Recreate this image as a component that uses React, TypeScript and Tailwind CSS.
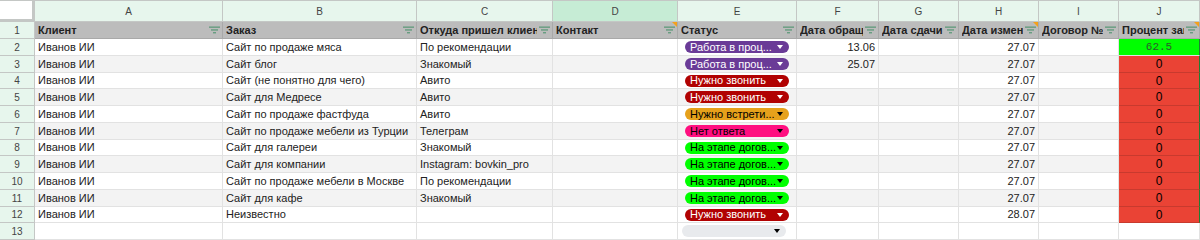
import React from 'react';

type Status = { label: string; bg: string; text: string; tri: string } | null;

const cols = [
  { key: 'A', w: 'w-[188px]' },
  { key: 'B', w: 'w-[194px]' },
  { key: 'C', w: 'w-[136px]' },
  { key: 'D', w: 'w-[125px]' },
  { key: 'E', w: 'w-[119px]' },
  { key: 'F', w: 'w-[82px]' },
  { key: 'G', w: 'w-[80px]' },
  { key: 'H', w: 'w-[80px]' },
  { key: 'I', w: 'w-[80px]' },
  { key: 'J', w: 'w-[81px]' },
];

const headers = [
  'Клиент',
  'Заказ',
  'Откуда пришел клиент',
  'Контакт',
  'Статус',
  'Дата обращения',
  'Дата сдачи',
  'Дата изменения',
  'Договор №',
  'Процент заполнения',
];

const work = { label: 'Работа в проц...', bg: 'bg-[#6a3b97]', text: 'text-white', tri: 'border-t-white' };
const call = { label: 'Нужно звонить', bg: 'bg-[#b10202]', text: 'text-white', tri: 'border-t-white' };
const meet = { label: 'Нужно встрети...', bg: 'bg-[#e6a11b]', text: 'text-black', tri: 'border-t-black' };
const noAnswer = { label: 'Нет ответа', bg: 'bg-[#ff0f80]', text: 'text-black', tri: 'border-t-black' };
const deal = { label: 'На этапе догов...', bg: 'bg-[#00ff00]', text: 'text-black', tri: 'border-t-black' };
const empty = { label: '', bg: 'bg-[#e8eaed]', text: 'text-black', tri: 'border-t-black' };

const rows: { a: string; b: string; c: string; s: Status; f: string; h: string; j: string }[] = [
  { a: 'Иванов ИИ', b: 'Сайт по продаже мяса', c: 'По рекомендации', s: work, f: '13.06', h: '27.07', j: '62.5' },
  { a: 'Иванов ИИ', b: 'Сайт блог', c: 'Знакомый', s: work, f: '25.07', h: '27.07', j: '0' },
  { a: 'Иванов ИИ', b: 'Сайт (не понятно для чего)', c: 'Авито', s: call, f: '', h: '27.07', j: '0' },
  { a: 'Иванов ИИ', b: 'Сайт для Медресе', c: 'Авито', s: call, f: '', h: '27.07', j: '0' },
  { a: 'Иванов ИИ', b: 'Сайт по продаже фастфуда', c: 'Авито', s: meet, f: '', h: '27.07', j: '0' },
  { a: 'Иванов ИИ', b: 'Сайт по продаже мебели из Турции', c: 'Телеграм', s: noAnswer, f: '', h: '27.07', j: '0' },
  { a: 'Иванов ИИ', b: 'Сайт для галереи', c: 'Знакомый', s: deal, f: '', h: '27.07', j: '0' },
  { a: 'Иванов ИИ', b: 'Сайт для компании', c: 'Instagram: bovkin_pro', s: deal, f: '', h: '27.07', j: '0' },
  { a: 'Иванов ИИ', b: 'Сайт по продаже мебели в Москве', c: 'По рекомендации', s: deal, f: '', h: '27.07', j: '0' },
  { a: 'Иванов ИИ', b: 'Сайт для кафе', c: 'Знакомый', s: deal, f: '', h: '27.07', j: '0' },
  { a: 'Иванов ИИ', b: 'Неизвестно', c: '', s: call, f: '', h: '28.07', j: '0' },
];

const FilterIcon = () => (
  <svg width="11" height="8" viewBox="0 0 11 8" className="shrink-0">
    <rect x="0" y="0.5" width="11" height="1.3" fill="#5f9a7b" />
    <rect x="2" y="3.3" width="7" height="1.3" fill="#5f9a7b" />
    <rect x="4" y="6.1" width="3" height="1.3" fill="#5f9a7b" />
  </svg>
);

const Corner = () => (
  <div className="absolute right-0 top-0 w-0 h-0 border-l-[5px] border-l-transparent border-t-[5px] border-t-[#f4a11b]" />
);

const Pill = ({ s }: { s: NonNullable<Status> }) => (
  <div className={`ml-[4px] w-[104px] h-[12px] rounded-full flex items-center pl-[5px] pr-[6px] ${s.bg}`}>
    <span className={`flex-1 text-[11px] leading-none whitespace-nowrap overflow-hidden ${s.text}`}>{s.label}</span>
    <span className={`w-0 h-0 border-l-[3.5px] border-r-[3.5px] border-l-transparent border-r-transparent border-t-[4px] ${s.tri}`} />
  </div>
);

export default function App() {
  const font = { fontFamily: '"Liberation Sans", Arial, sans-serif' };
  return (
    <div className="w-[1200px] h-[240px] overflow-hidden bg-white text-[#222] text-[11px]" style={font}>
      {/* column letters */}
      <div className="flex h-[22px] border-t border-[#c4c7c5]">
        <div className="w-[35px] shrink-0 bg-white border-r-[3px] border-b-[3px] border-[#c4c7c5]" />
        {cols.map(c => (
          <div
            key={c.key}
            className={`${c.w} shrink-0 flex items-center justify-center text-[10px] text-[#444] border-r border-b border-[#c4c7c5] ${c.key === 'D' ? 'bg-[#c6ecd5]' : 'bg-[#e7f6ed]'}`}
          >
            {c.key}
          </div>
        ))}
      </div>

      {/* header row */}
      <div className="flex h-[17px]">
        <div className="w-[35px] shrink-0 bg-[#e7f6ed] border-r border-b border-[#c4c7c5] flex items-center justify-center text-[10px] text-[#444]">1</div>
        {cols.map((c, i) => (
          <div key={c.key} className={`${c.w} shrink-0 relative flex items-center pl-[3px] pr-[2px] gap-[2px] bg-[#bcbcbc] border-r border-b border-[#a9a9a9] font-bold`}>
            <span className="flex-1 min-w-0 whitespace-nowrap overflow-hidden">{headers[i]}</span>
            <FilterIcon />
            {(c.key === 'D' || c.key === 'H' || c.key === 'J') && <Corner />}
          </div>
        ))}
      </div>

      {/* data rows */}
      {rows.map((r, idx) => {
        const n = idx + 2;
        const h = idx % 4 === 2 ? 'h-[16px]' : 'h-[17px]';
        const band = n % 2 === 1 ? 'bg-[#f3f3f3]' : 'bg-white';
        const cell = `shrink-0 flex items-center px-[3px] whitespace-nowrap overflow-hidden border-r border-b border-[#e2e2e2] ${band}`;
        const zero = r.j === '0';
        return (
          <div key={n} className={`flex ${h}`}>
            <div className="w-[35px] shrink-0 bg-[#e7f6ed] border-r border-b border-[#c4c7c5] flex items-center justify-center text-[10px] text-[#444]">{n}</div>
            <div className={`w-[188px] ${cell}`}>{r.a}</div>
            <div className={`w-[194px] ${cell}`}>{r.b}</div>
            <div className={`w-[136px] ${cell}`}>{r.c}</div>
            <div className={`w-[125px] ${cell}`} />
            <div className={`w-[119px] ${cell}`}>{r.s && <Pill s={r.s} />}</div>
            <div className={`w-[82px] justify-end ${cell}`}>{r.f}</div>
            <div className={`w-[80px] ${cell}`} />
            <div className={`w-[80px] justify-end ${cell}`}>{r.h}</div>
            <div className={`w-[80px] ${cell}`} />
            <div
              className={`w-[81px] shrink-0 flex items-center justify-center border-r border-r-[#1e7e34] border-b ${zero ? 'bg-[#ea4335] border-b-[#c83a2e] text-black text-[12px]' : 'bg-[#00ff00] border-b-[#e2e2e2] text-[#2d5a2d]'}`}
              style={zero ? undefined : { fontFamily: '"Liberation Mono", "Courier New", monospace' }}
            >
              {r.j}
            </div>
          </div>
        );
      })}

      {/* row 13 */}
      <div className="flex h-[17px]">
        <div className="w-[35px] shrink-0 bg-[#e7f6ed] border-r border-b border-[#c4c7c5] flex items-center justify-center text-[10px] text-[#444]">13</div>
        {cols.map(c => (
          <div key={c.key} className={`${c.w} shrink-0 flex items-center border-r border-b border-[#e2e2e2]`}>
            {c.key === 'E' && <Pill s={empty} />}
          </div>
        ))}
      </div>
    </div>
  );
}
